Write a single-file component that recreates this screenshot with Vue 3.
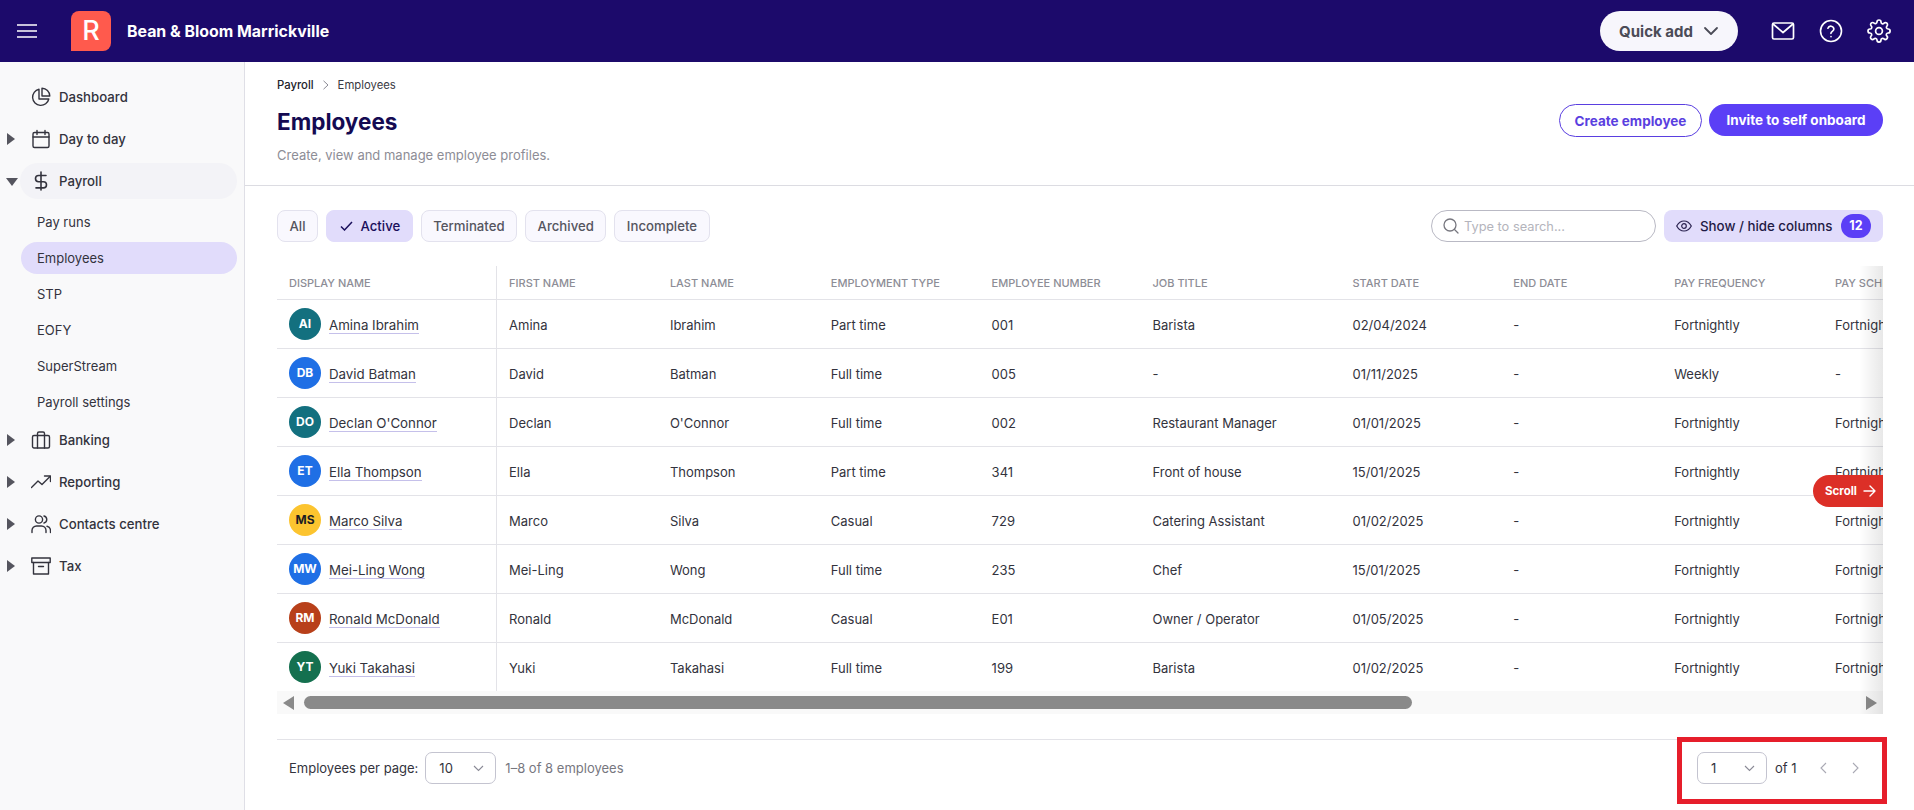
<script setup>
const topNav = [
  { label: 'Dashboard', icon: 'pie' },
  { label: 'Day to day', icon: 'calendar', caret: 'closed' },
  { label: 'Payroll', icon: 'dollar', caret: 'open', current: true },
]

const payrollItems = ['Pay runs', 'Employees', 'STP', 'EOFY', 'SuperStream', 'Payroll settings']

const bottomNav = [
  { label: 'Banking', icon: 'briefcase', caret: 'closed' },
  { label: 'Reporting', icon: 'trend', caret: 'closed' },
  { label: 'Contacts centre', icon: 'users', caret: 'closed' },
  { label: 'Tax', icon: 'archive', caret: 'closed' },
]

const filters = ['All', 'Active', 'Terminated', 'Archived', 'Incomplete']

const columns = [
  'Display name',
  'First name',
  'Last name',
  'Employment type',
  'Employee number',
  'Job title',
  'Start date',
  'End date',
  'Pay frequency',
  'Pay schedule',
]

const employees = [
  { initials: 'AI', color: '#13707f', first: 'Amina', last: 'Ibrahim', type: 'Part time', num: '001', job: 'Barista', start: '02/04/2024', freq: 'Fortnightly', sched: 'Fortnightly' },
  { initials: 'DB', color: '#1f6fe5', first: 'David', last: 'Batman', type: 'Full time', num: '005', job: '-', start: '01/11/2025', freq: 'Weekly', sched: '-' },
  { initials: 'DO', color: '#13707f', first: 'Declan', last: "O'Connor", type: 'Full time', num: '002', job: 'Restaurant Manager', start: '01/01/2025', freq: 'Fortnightly', sched: 'Fortnightly' },
  { initials: 'ET', color: '#1f6fe5', first: 'Ella', last: 'Thompson', type: 'Part time', num: '341', job: 'Front of house', start: '15/01/2025', freq: 'Fortnightly', sched: 'Fortnightly' },
  { initials: 'MS', color: '#fcc42f', dark: true, first: 'Marco', last: 'Silva', type: 'Casual', num: '729', job: 'Catering Assistant', start: '01/02/2025', freq: 'Fortnightly', sched: 'Fortnightly' },
  { initials: 'MW', color: '#1f6fe5', first: 'Mei-Ling', last: 'Wong', type: 'Full time', num: '235', job: 'Chef', start: '15/01/2025', freq: 'Fortnightly', sched: 'Fortnightly' },
  { initials: 'RM', color: '#b8401a', first: 'Ronald', last: 'McDonald', type: 'Casual', num: 'E01', job: 'Owner / Operator', start: '01/05/2025', freq: 'Fortnightly', sched: 'Fortnightly' },
  { initials: 'YT', color: '#14704f', first: 'Yuki', last: 'Takahasi', type: 'Full time', num: '199', job: 'Barista', start: '01/02/2025', freq: 'Fortnightly', sched: 'Fortnightly' },
]
</script>

<template>
  <div class="app">
    <header class="topbar">
      <svg class="burger" width="20" height="14" viewBox="0 0 20 14" fill="none" stroke="#fff" stroke-width="1.6">
        <path d="M0 1h20M0 7h20M0 13h20" />
      </svg>
      <div class="logo">R</div>
      <div class="org">Bean &amp; Bloom Marrickville</div>
      <button class="quick-add">
        Quick add
        <svg width="16" height="10" viewBox="0 0 16 10" fill="none" stroke="#4b4b57" stroke-width="1.8" stroke-linecap="round" stroke-linejoin="round">
          <path d="M2 2l6 6 6-6" />
        </svg>
      </button>
      <svg class="top-icon mail" width="24" height="24" viewBox="0 0 24 24" fill="none" stroke="#fff" stroke-width="1.7" stroke-linejoin="round">
        <rect x="1.5" y="4" width="21" height="16" rx="1.5" />
        <path d="M2 5l10 8.5L22 5" />
      </svg>
      <svg class="top-icon help" width="24" height="24" viewBox="0 0 24 24" fill="none" stroke="#fff" stroke-width="1.6" stroke-linecap="round">
        <circle cx="12" cy="12" r="10.5" />
        <path d="M8.9 9.2a3.1 3.1 0 0 1 6 .9c0 2-3 2.6-3 4.3" />
        <path d="M12 17.6v.1" />
      </svg>
      <svg class="top-icon gear" width="24" height="24" viewBox="0 0 24 24" fill="none" stroke="#fff" stroke-width="1.7" stroke-linejoin="round">
        <circle cx="12" cy="12" r="3.4" />
        <path d="M19.4 15a1.7 1.7 0 0 0 .3 1.8l.1.1a2 2 0 1 1-2.9 2.9l-.1-.1a1.7 1.7 0 0 0-2.8 1.2v.2a2 2 0 1 1-4 0V21a1.7 1.7 0 0 0-2.9-1.2l-.1.1a2 2 0 1 1-2.9-2.9l.1-.1A1.7 1.7 0 0 0 3 14H3a2 2 0 1 1 0-4h.1a1.7 1.7 0 0 0 1.2-2.9l-.1-.1a2 2 0 1 1 2.9-2.9l.1.1A1.7 1.7 0 0 0 10 3V3a2 2 0 1 1 4 0v.1a1.7 1.7 0 0 0 2.9 1.2l.1-.1a2 2 0 1 1 2.9 2.9l-.1.1A1.7 1.7 0 0 0 21 10h.1a2 2 0 1 1 0 4H21a1.7 1.7 0 0 0-1.6 1z" />
      </svg>
    </header>

    <div class="body">
      <aside class="sidebar">
        <div v-for="item in topNav" :key="item.label" class="nav-row">
          <span v-if="item.caret === 'closed'" class="caret-closed"></span>
          <span v-if="item.caret === 'open'" class="caret-open"></span>
          <div class="nav-item" :class="{ current: item.current }">
            <svg class="nav-icon" width="20" height="20" viewBox="0 0 20 20" fill="none" stroke="#33333d" stroke-width="1.4" stroke-linecap="round" stroke-linejoin="round">
              <template v-if="item.icon === 'pie'">
                <path d="M8 2.2a8.2 8.2 0 1 0 9.8 9.8H8z" />
                <path d="M11 1.2a8 8 0 0 1 7.8 7.8H11z" />
              </template>
              <template v-if="item.icon === 'calendar'">
                <rect x="2" y="3.5" width="16" height="15" rx="1.5" />
                <path d="M2 8h16M6 1.5v4M14 1.5v4" />
              </template>
              <template v-if="item.icon === 'dollar'">
                <path d="M10 1v18" stroke-width="1.6" />
                <path d="M15 4.5H7.6a3.1 3.1 0 0 0 0 6.2h4.8a3.1 3.1 0 0 1 0 6.2H5" stroke-width="1.6" />
              </template>
            </svg>
            {{ item.label }}
          </div>
        </div>

        <div class="sub-list">
          <div
            v-for="sub in payrollItems"
            :key="sub"
            class="sub-item"
            :class="{ selected: sub === 'Employees' }"
          >
            <span>{{ sub }}</span>
          </div>
        </div>

        <div v-for="item in bottomNav" :key="item.label" class="nav-row">
          <span class="caret-closed"></span>
          <div class="nav-item">
            <svg class="nav-icon" width="20" height="20" viewBox="0 0 20 20" fill="none" stroke="#33333d" stroke-width="1.4" stroke-linecap="round" stroke-linejoin="round">
              <template v-if="item.icon === 'briefcase'">
                <rect x="1.5" y="5.5" width="17" height="12.5" rx="1.5" />
                <path d="M6.5 18V3.5a1.5 1.5 0 0 1 1.5-1.5h4a1.5 1.5 0 0 1 1.5 1.5V18" />
              </template>
              <template v-if="item.icon === 'trend'">
                <path d="M0.5 15.5l6.5-6.5 4 3.5 8-8" />
                <path d="M13.5 4h6v5.5" />
              </template>
              <template v-if="item.icon === 'users'">
                <circle cx="8" cy="5.5" r="3.6" />
                <path d="M1 18.5v-2a4.5 4.5 0 0 1 4.5-4.5h5a4.5 4.5 0 0 1 4.5 4.5v2" />
                <path d="M13 2a3.6 3.6 0 0 1 0 7M16 12.2a4.5 4.5 0 0 1 3.5 4.3v2" />
              </template>
              <template v-if="item.icon === 'archive'">
                <rect x="0.8" y="2" width="18.4" height="4.5" />
                <path d="M2.5 6.5V18h15V6.5M7.5 10.5h5" />
              </template>
            </svg>
            {{ item.label }}
          </div>
        </div>
      </aside>

      <main class="main">
        <section class="page-head">
          <div class="page-head-text">
            <div class="crumbs">
              <span class="crumb-parent">Payroll</span>
              <svg width="8" height="10" viewBox="0 0 8 10" fill="none" stroke="#8a8a94" stroke-width="1">
                <path d="M1.5 0.8L6 5l-4.5 4.2" />
              </svg>
              <span>Employees</span>
            </div>
            <h1>Employees</h1>
            <p>Create, view and manage employee profiles.</p>
          </div>
          <div class="head-actions">
            <button class="btn-outline">Create employee</button>
            <button class="btn-solid">Invite to self onboard</button>
          </div>
        </section>

        <section class="content">
          <div class="toolbar">
            <div class="chips">
              <button
                v-for="f in filters"
                :key="f"
                class="chip"
                :class="{ on: f === 'Active' }"
              >
                <svg v-if="f === 'Active'" width="13" height="10" viewBox="0 0 13 10" fill="none" stroke="#1a0f5c" stroke-width="1.5">
                  <path d="M1 5.5L4.5 9 12 1" />
                </svg>
                {{ f }}
              </button>
            </div>
            <div class="search">
              <svg width="16" height="16" viewBox="0 0 16 16" fill="none" stroke="#77777f" stroke-width="1.3" stroke-linecap="round">
                <circle cx="7" cy="7" r="6" />
                <path d="M11.5 11.5L15 15" />
              </svg>
              <span>Type to search...</span>
            </div>
            <button class="columns-btn">
              <svg width="16" height="12" viewBox="0 0 16 12" fill="none" stroke="#2b2350" stroke-width="1.2">
                <path d="M0.7 6C2.5 2.7 5 1 8 1s5.5 1.7 7.3 5c-1.8 3.3-4.3 5-7.3 5S2.5 9.3 0.7 6z" />
                <circle cx="8" cy="6" r="2.3" />
              </svg>
              <span class="columns-label">Show / hide columns</span>
              <span class="count">12</span>
            </button>
          </div>

          <div class="table-wrap">
            <div class="table-clip">
              <table>
                <colgroup>
                  <col style="width: 220px" />
                  <col v-for="n in 4" :key="n" style="width: 160.85px" />
                  <col style="width: 200px" />
                  <col v-for="n in 4" :key="'b' + n" style="width: 160.85px" />
                </colgroup>
                <thead>
                  <tr>
                    <th v-for="c in columns" :key="c">{{ c }}</th>
                  </tr>
                </thead>
                <tbody>
                  <tr v-for="e in employees" :key="e.initials">
                    <td>
                      <div class="person">
                        <span class="avatar" :class="{ dark: e.dark }" :style="{ background: e.color }">{{ e.initials }}</span>
                        <a class="person-name">{{ e.first }} {{ e.last }}</a>
                      </div>
                    </td>
                    <td>{{ e.first }}</td>
                    <td>{{ e.last }}</td>
                    <td>{{ e.type }}</td>
                    <td>{{ e.num }}</td>
                    <td>{{ e.job }}</td>
                    <td>{{ e.start }}</td>
                    <td>-</td>
                    <td>{{ e.freq }}</td>
                    <td>{{ e.sched }}</td>
                  </tr>
                </tbody>
              </table>
            </div>
            <div class="hscroll">
              <span class="arrow-left"></span>
              <div class="track"><div class="thumb"></div></div>
              <span class="arrow-right"></span>
            </div>
            <div class="edge-shadow"></div>
            <div class="scroll-pill">
              Scroll
              <svg width="13" height="12" viewBox="0 0 13 12" fill="none" stroke="#fff" stroke-width="1.4" stroke-linecap="round" stroke-linejoin="round">
                <path d="M1 6h11M7 1l5 5-5 5" />
              </svg>
            </div>
          </div>

          <footer class="table-foot">
            <div class="per-page">
              <span>Employees per page:</span>
              <div class="select select-wide">
                10
                <svg width="11" height="7" viewBox="0 0 11 7" fill="none" stroke="#8a8a96" stroke-width="1.1"><path d="M1 1l4.5 4.5L10 1" /></svg>
              </div>
              <span class="range">1–8 of 8 employees</span>
            </div>
            <div class="pager">
              <div class="select">
                1
                <svg width="11" height="7" viewBox="0 0 11 7" fill="none" stroke="#8a8a96" stroke-width="1.1"><path d="M1 1l4.5 4.5L10 1" /></svg>
              </div>
              <span class="of">of 1</span>
              <svg class="page-prev" width="7" height="12" viewBox="0 0 7 12" fill="none" stroke="#a9a9b4" stroke-width="1.1"><path d="M6 1L1 6l5 5" /></svg>
              <svg class="page-next" width="7" height="12" viewBox="0 0 7 12" fill="none" stroke="#a9a9b4" stroke-width="1.1"><path d="M1 1l5 5-5 5" /></svg>
              <div class="highlight"></div>
            </div>
          </footer>
        </section>
      </main>
    </div>
  </div>
</template>

<style scoped>
.app {
  width: 1914px;
  height: 810px;
  display: flex;
  flex-direction: column;
  overflow: hidden;
  font-family: Inter, "Noto Sans", sans-serif;
  font-size: 13px;
  color: #33333d;
  background: #fff;
}

button {
  font-family: inherit;
  cursor: pointer;
}

.topbar {
  height: 62px;
  flex: none;
  display: flex;
  align-items: center;
  background: #1c0a6b;
  color: #fff;
}

.burger {
  margin-left: 17px;
}

.logo {
  width: 40px;
  height: 40px;
  margin-left: 34px;
  border-radius: 8px 8px 8px 0;
  background: #ff5a4d;
  color: #fff;
  font-size: 27px;
  font-weight: 500;
  line-height: 40px;
  text-align: center;
}

.org {
  margin-left: 16px;
  font-size: 15.9px;
  font-weight: 700;
}

.quick-add {
  margin-left: auto;
  width: 138px;
  height: 40px;
  display: flex;
  align-items: center;
  justify-content: center;
  gap: 10px;
  border: none;
  border-radius: 20px;
  background: #f7f6fc;
  color: #4b4b57;
  font-size: 15px;
  font-weight: 700;
}

.top-icon {
  flex: none;
}

.mail {
  margin-left: 33px;
}

.help {
  margin-left: 24px;
}

.gear {
  margin-left: 24px;
  margin-right: 23px;
}

.body {
  flex: 1;
  display: flex;
  min-height: 0;
}

.sidebar {
  width: 245px;
  flex: none;
  padding-top: 14px;
  box-sizing: border-box;
  background: #f9f9fa;
  border-right: 1px solid #dfdfe6;
}

.nav-row {
  position: relative;
  height: 42px;
  display: flex;
  align-items: center;
  padding: 0 7px 0 20px;
}

.nav-item {
  flex: 1;
  height: 36px;
  display: flex;
  align-items: center;
  gap: 8px;
  padding-left: 11px;
  border-radius: 18px;
  font-size: 13.2px;
  font-weight: 500;
}

.nav-item.current {
  background: #f3f3f7;
}

.nav-icon {
  flex: none;
}

.caret-closed {
  position: absolute;
  left: 7px;
  top: 15px;
  border-left: 8px solid #55555e;
  border-top: 6px solid transparent;
  border-bottom: 6px solid transparent;
}

.caret-open {
  position: absolute;
  left: 6px;
  top: 18px;
  border-top: 8px solid #55555e;
  border-left: 6px solid transparent;
  border-right: 6px solid transparent;
}

.sub-list {
  margin: 2px 0 -1px;
}

.sub-item {
  height: 36px;
  display: flex;
  align-items: center;
  padding: 0 7px 0 21px;
}

.sub-item span {
  flex: 1;
  padding-left: 16px;
  line-height: 32px;
  border-radius: 16px;
}

.sub-item.selected span {
  background: #e1dcfb;
}

.main {
  flex: 1;
  min-width: 0;
}

.page-head {
  height: 124px;
  box-sizing: border-box;
  display: flex;
  justify-content: space-between;
  padding: 14px 31px 0 32px;
  border-bottom: 1px solid #dcdce2;
}

.crumbs {
  display: flex;
  align-items: center;
  gap: 8px;
  height: 16px;
  padding-top: 1px;
  font-size: 11.3px;
  color: #3a3a44;
}

.crumb-parent {
  font-weight: 500;
  color: #22222a;
}

h1 {
  margin: 13px 0 0;
  font-size: 22.5px;
  font-weight: 700;
  line-height: 32px;
  color: #140a52;
}

.page-head p {
  margin: 8px 0 0;
  font-size: 13px;
  line-height: 18px;
  color: #8d8d96;
}

.head-actions {
  display: flex;
  gap: 7px;
  margin-top: 28px;
  align-items: flex-start;
}

.btn-outline,
.btn-solid {
  height: 33px;
  border-radius: 17px;
  font-size: 13.5px;
  font-weight: 700;
}

.btn-outline {
  width: 143px;
  background: #fff;
  color: #5a3fe0;
  border: 1px solid #5a3fe0;
}

.btn-solid {
  width: 174px;
  height: 32px;
  background: #5b3ff6;
  color: #fff;
  border: none;
}

.content {
  padding: 24px 31px 0 32px;
}

.toolbar {
  display: flex;
  align-items: center;
  height: 32px;
}

.chips {
  display: flex;
  gap: 8px;
  margin-right: auto;
}

.chip {
  height: 32px;
  display: flex;
  align-items: center;
  gap: 8px;
  padding: 0 11.5px;
  border: 1px solid #e3e2ee;
  border-radius: 8px;
  background: #f9f8fe;
  color: #55555f;
  font-size: 13.2px;
  font-weight: 500;
}

.chip.on {
  background: #e1dcfb;
  border-color: #e1dcfb;
  color: #1a0f5c;
  padding: 0 11.5px 0 12.5px;
}

.search {
  width: 225px;
  height: 32px;
  box-sizing: border-box;
  display: flex;
  align-items: center;
  gap: 5px;
  padding-left: 11px;
  border: 1px solid #b9b9c4;
  border-radius: 16px;
  color: #b4b4bc;
  font-size: 12.8px;
}

.columns-btn {
  width: 219px;
  height: 32px;
  margin-left: 8px;
  display: flex;
  align-items: center;
  gap: 8px;
  padding: 0 12px;
  border: none;
  border-radius: 8px;
  background: #e1dcfb;
  color: #1f1a45;
  font-size: 13.3px;
  font-weight: 500;
  white-space: nowrap;
}

.columns-label {
  flex: 1;
  text-align: left;
}

.count {
  width: 30px;
  height: 24px;
  border-radius: 12px;
  background: #5b3ff6;
  color: #fff;
  font-size: 12.5px;
  font-weight: 700;
  line-height: 24px;
  text-align: center;
}

.table-wrap {
  position: relative;
  margin-top: 24px;
}

.table-clip {
  overflow: hidden;
}

table {
  width: 1707px;
  table-layout: fixed;
  border-collapse: separate;
  border-spacing: 0;
}

th {
  height: 33px;
  padding: 0 12px;
  border-bottom: 1px solid #e3e3e8;
  text-align: left;
  font-size: 11px;
  font-weight: 500;
  text-transform: uppercase;
  color: #8d8d96;
  white-space: nowrap;
  overflow: hidden;
}

td {
  height: 47px;
  padding: 1px 12px 0;
  border-bottom: 1px solid #e3e3e8;
  font-size: 13px;
  color: #33333d;
  white-space: nowrap;
  overflow: hidden;
}

tbody tr:last-child td {
  border-bottom: none;
}

th:first-child,
td:first-child {
  border-right: 1px solid #e3e3e8;
}

.person {
  display: flex;
  align-items: center;
  gap: 8px;
  margin-top: -1px;
}

.avatar {
  width: 32px;
  height: 32px;
  flex: none;
  border-radius: 50%;
  color: #fff;
  font-size: 12px;
  font-weight: 700;
  line-height: 32px;
  text-align: center;
}

.avatar.dark {
  color: #1c1c22;
}

.person-name {
  border-bottom: 1px solid #c5c0ea;
  font-size: 13.3px;
  line-height: 16px;
  margin-top: 2px;
}

.hscroll {
  height: 23px;
  display: flex;
  align-items: center;
  background: #f9f9f9;
}

.arrow-left {
  margin-left: 6px;
  border-right: 11px solid #8a8a8a;
  border-top: 7px solid transparent;
  border-bottom: 7px solid transparent;
}

.arrow-right {
  margin-right: 6px;
  border-left: 11px solid #8a8a8a;
  border-top: 7px solid transparent;
  border-bottom: 7px solid transparent;
}

.track {
  flex: 1;
  padding: 0 10px;
}

.thumb {
  width: 1108px;
  height: 13px;
  border-radius: 7px;
  background: #8a8a8a;
}

.edge-shadow {
  position: absolute;
  top: 0;
  right: 0;
  bottom: 0;
  width: 24px;
  background: linear-gradient(to right, rgba(0, 0, 0, 0), rgba(0, 0, 0, 0.09));
  pointer-events: none;
}

.scroll-pill {
  position: absolute;
  top: 209px;
  right: 0;
  width: 70px;
  height: 32px;
  box-sizing: border-box;
  display: flex;
  align-items: center;
  gap: 6px;
  padding-left: 12px;
  border-radius: 16px 0 0 16px;
  background: #dc2f27;
  color: #fff;
  font-size: 11.5px;
  font-weight: 700;
}

.table-foot {
  display: flex;
  justify-content: space-between;
  align-items: center;
  margin-top: 25px;
  padding: 12px 0 0 12px;
  border-top: 1px solid #e3e3e8;
}

.per-page {
  display: flex;
  align-items: center;
}

.range {
  margin-left: 9px;
  color: #77777f;
}

.select {
  width: 70px;
  height: 32px;
  box-sizing: border-box;
  display: flex;
  align-items: center;
  justify-content: space-between;
  padding: 0 11px 0 13px;
  border: 1px solid #c4c4d0;
  border-radius: 7px;
  color: #33333d;
}

.select-wide {
  width: 71px;
  margin-left: 7px;
}

.pager {
  position: relative;
  display: flex;
  align-items: center;
  width: 186px;
}

.of {
  margin-left: 8px;
}

.page-prev {
  margin-left: 23px;
}

.page-next {
  margin-left: 25px;
}

.highlight {
  position: absolute;
  top: -15px;
  bottom: -20px;
  left: -20px;
  right: -4px;
  border: 5px solid #e61e2b;
  pointer-events: none;
}
</style>

<style>
body {
  overflow: hidden;
}
</style>
